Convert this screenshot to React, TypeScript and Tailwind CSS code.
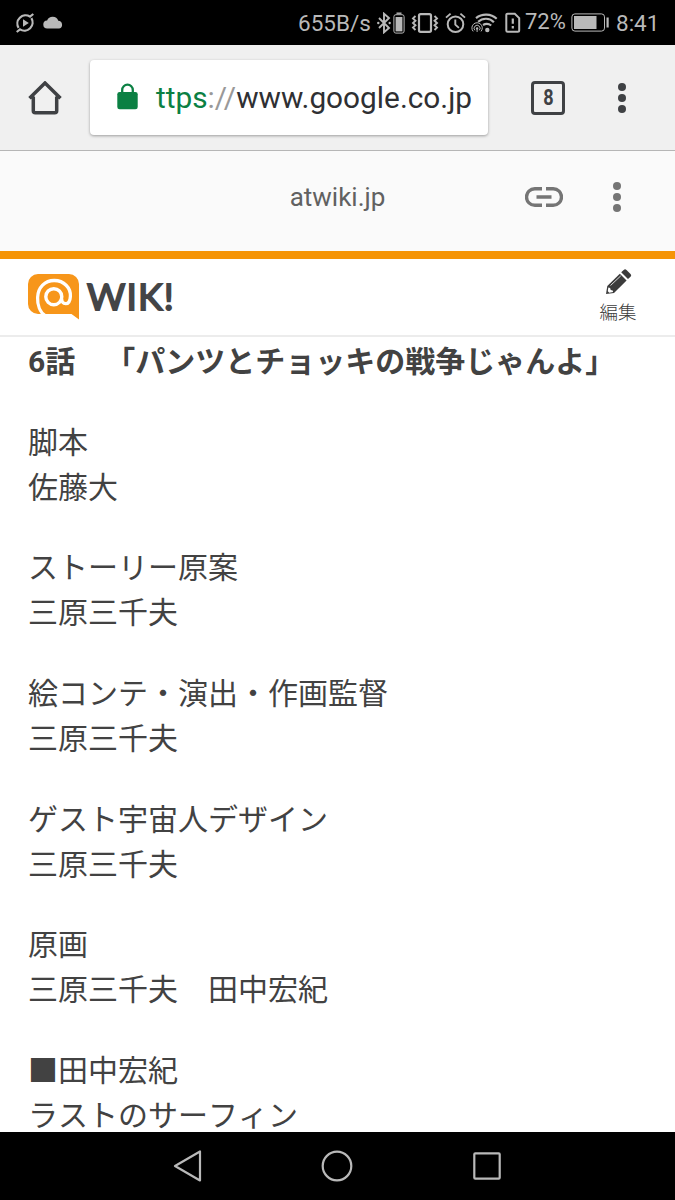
import type { ReactNode } from 'react';

const credits = [
  ['脚本', '佐藤大'],
  ['ストーリー原案', '三原三千夫'],
  ['絵コンテ・演出・作画監督', '三原三千夫'],
  ['ゲスト宇宙人デザイン', '三原三千夫'],
  ['原画', '三原三千夫　田中宏紀'],
  ['■田中宏紀', 'ラストのサーフィン'],
];

function Icon({ w, h, className = '', children }: { w: number; h: number; className?: string; children: ReactNode }) {
  return (
    <svg width={w} height={h} viewBox={`0 0 ${w} ${h}`} fill="none" className={`shrink-0 ${className}`}>
      {children}
    </svg>
  );
}

function MoreDots({ className }: { className: string }) {
  return (
    <Icon w={10} h={32} className={className}>
      <circle cx="5" cy="5" r="4" fill="currentColor" />
      <circle cx="5" cy="16" r="4" fill="currentColor" />
      <circle cx="5" cy="27" r="4" fill="currentColor" />
    </Icon>
  );
}

function StatusBar() {
  return (
    <div className="h-[45px] shrink-0 bg-black text-[#b9b9b9] flex items-center pl-[15px]">
      <Icon w={20} h={20}>
        <path d="M3.6 14.8A8.2 8.2 0 0 1 15 3.6L18.3 1M16.4 5.2A8.2 8.2 0 0 1 5 16.4L1.7 19" stroke="currentColor" strokeWidth="2.2" />
        <path d="M8 6.3v7.4l5.8-3.7z" fill="currentColor" />
      </Icon>
      <Icon w={21} h={13} className="ml-2">
        <path d="M4.5 12.5a4 4 0 0 1-.4-8A6 6 0 0 1 15.3 4.7a4 4 0 0 1 1 7.8z" fill="currentColor" />
      </Icon>

      <span className="ml-[234px] mt-[2px] w-[79px] text-[22.5px] leading-none whitespace-nowrap">655B/s</span>

      {/* Bluetooth + headset battery */}
      <Icon w={14} h={22}>
        <path d="M2 6l10 10-5 4.3V1.7L12 6 2 16" stroke="currentColor" strokeWidth="1.9" />
        <circle cx="1.3" cy="11" r="1.2" fill="currentColor" />
        <circle cx="12.7" cy="11" r="1.2" fill="currentColor" />
      </Icon>
      <Icon w={12} h={22} className="ml-[2px]">
        <path d="M3.5 1.2h5" stroke="currentColor" strokeWidth="1.4" />
        <rect x=".9" y="2.7" width="10.2" height="18.4" rx="2" stroke="currentColor" strokeWidth="1" />
        <rect x="2.6" y="5" width="6.8" height="14.4" fill="currentColor" />
      </Icon>

      {/* Vibrate */}
      <Icon w={28} h={20} className="ml-[6px]">
        <rect x="8" y="1.2" width="12" height="17.6" rx="1.5" stroke="currentColor" strokeWidth="2.2" />
        <path d="M4.5 3L2 5.4l2.5 2.3L2 10l2.5 2.3L2 14.6 4.5 17M23.5 3L26 5.4l-2.5 2.3L26 10l-2.5 2.3 2.5 2.3-2.5 2.4" stroke="currentColor" strokeWidth="1.9" />
      </Icon>

      {/* Alarm */}
      <Icon w={21} h={22} className="ml-[6px]">
        <circle cx="10.5" cy="12.3" r="7.8" stroke="currentColor" strokeWidth="2" />
        <path d="M1 5.6l4.6-4M20 5.6l-4.6-4M10.3 7.4v5.2l3.6 3.3" stroke="currentColor" strokeWidth="1.9" />
      </Icon>

      {/* Wi-Fi with a hotspot badge */}
      <Icon w={28} h={22} className="ml-[5px]">
        <path d="M5 6.2a16 16 0 0 1 20.7.6M7.2 9.8a11 11 0 0 1 15.7.5M12 13a7 7 0 0 1 8.2.5" stroke="currentColor" strokeWidth="2.2" />
        <circle cx="16.3" cy="18" r="2.2" fill="currentColor" />
        <path d="M2.2 19.4a5.2 5.2 0 1 1 7.8 0M3.9 18.3a3 3 0 1 1 4.4 0" stroke="currentColor" strokeWidth="1" />
        <circle cx="6.1" cy="16.4" r="1.2" fill="currentColor" />
        <path d="M6.1 16.4V20" stroke="currentColor" strokeWidth="1" />
      </Icon>

      {/* SIM alert */}
      <Icon w={16} h={22} className="ml-[6px]">
        <path d="M2.6 1.7h7.2l4.4 4.4v12.2a1.5 1.5 0 0 1-1.5 1.5H2.6a1.3 1.3 0 0 1-1.3-1.3V3a1.3 1.3 0 0 1 1.3-1.3z" stroke="currentColor" strokeWidth="2" />
        <path d="M7.8 6.5v5.3M7.8 14v2.4" stroke="currentColor" strokeWidth="2.2" />
      </Icon>

      <span className="ml-[4px] w-[46px] text-[22px] leading-none whitespace-nowrap -mt-px">72%</span>
      <Icon w={39} h={19} className="-mt-px">
        <rect x=".9" y=".9" width="32.6" height="17.2" rx="3" stroke="currentColor" strokeWidth="1" />
        <rect x="3" y="3" width="22.5" height="13" fill="currentColor" />
        <rect x="35.5" y="4.5" width="2.2" height="10" fill="currentColor" />
      </Icon>
      <span className="ml-[6px] mt-[2px] text-[22.5px] leading-none whitespace-nowrap">8:41</span>
    </div>
  );
}

function Toolbar() {
  return (
    <div className="h-[106px] shrink-0 bg-[#f0f0f0] border-b border-[#b6b6b6] flex items-center pl-[28px]">
      <Icon w={34} h={34} className="text-[#3f4144]">
        <path d="M1.5 17.2L17 2l15.5 15.2M5.3 15.5v14.3a2 2 0 0 0 2 2h19.4a2 2 0 0 0 2-2V15.5" stroke="currentColor" strokeWidth="3.5" />
      </Icon>

      <div className="ml-[28px] w-[398px] h-[75px] bg-white rounded-[4px] shadow-[0_1px_3px_rgba(0,0,0,0.35)] flex items-center pl-[27px]">
        <Icon w={21} h={27} className="text-[#0b8043] -mt-[3px]">
          <path d="M5.2 10V7a5.3 5.3 0 0 1 10.6 0v3" stroke="currentColor" strokeWidth="2.3" />
          <rect x=".3" y="9" width="20.4" height="17.3" rx="2.3" fill="currentColor" />
        </Icon>
        <div className="ml-[18px] text-[29.8px] leading-none whitespace-nowrap text-[#2f3033]">
          <span className="text-[#0b8043]">ttps</span>
          <span className="text-[#999]">://</span>
          www.google.co.jp
        </div>
      </div>

      <div className="ml-[43px] w-[34px] h-[34px] border-[3.5px] border-[#3f4144] rounded-[4px] flex items-center justify-center text-[22px] leading-none font-bold text-[#3f4144]">
        <span className="scale-x-[0.82]">8</span>
      </div>
      <MoreDots className="ml-[52px] text-[#3f4144]" />
    </div>
  );
}

function SiteBar() {
  return (
    <div className="h-[100px] shrink-0 bg-[#fafafa] flex items-center pb-[8px]">
      <span className="ml-[175px] w-[325px] text-center text-[26px] leading-none text-[#616161]">atwiki.jp</span>
      <Icon w={38} h={20} className="ml-[25px] text-[#757575]">
        <path d="M17 1.7H9.8a8.3 8.3 0 0 0 0 16.6H17M21 1.7h7.2a8.3 8.3 0 0 1 0 16.6H21M11.5 10h15" stroke="currentColor" strokeWidth="3.4" />
      </Icon>
      <MoreDots className="ml-[49px] text-[#757575]" />
    </div>
  );
}

function WikiLogo() {
  return (
    <div className="flex items-start">
      <Icon w={51} h={46}>
        <path d="M10 0h31a10 10 0 0 1 10 10v35.5L43.5 40H10A10 10 0 0 1 0 30V10A10 10 0 0 1 10 0z" fill="#f7961a" />
        <path d="M17.5 42C12 38.5 9.3 31 9.6 23.5 10 13.5 17 6.4 26.3 6.5 36 6.6 42.8 13.8 42.4 22.3c-.3 5-2.2 7.4-4.7 7.4-2.6 0-4.2-2-4-5" stroke="#fff" strokeWidth="3.3" />
        <circle cx="25.8" cy="22.7" r="8" stroke="#fff" strokeWidth="3.4" />
      </Icon>
      <span className="ml-[8px] font-[Lato,sans-serif] text-[37px] leading-[44px] tracking-[1.2px] whitespace-nowrap text-[#444547] [-webkit-text-stroke:1.8px_#444547]">
        WIK!
      </span>
    </div>
  );
}

function WikiHeader() {
  return (
    <div className="h-[86px] shrink-0 bg-white border-t-[8px] border-t-[#f59406] border-b-2 border-b-[#ececec] flex justify-between pl-[28px] pr-[38px]">
      <div className="pt-[15px]">
        <WikiLogo />
      </div>
      <div className="w-[38px] flex flex-col items-center pt-[10px] text-[#3c3c3c]">
        <Icon w={27} h={26}>
          <path d="M1 25l1.3-8L14.8 4.7l6.8 6.7L9 24z" fill="currentColor" />
          <path d="M16.2 3.3L18.7.9a2 2 0 0 1 2.8 0l4 4a2 2 0 0 1 0 2.8L23 10z" fill="currentColor" />
          <path d="M5.5 16.5L15.8 6.8" stroke="#fff" strokeWidth=".8" />
          <path d="M3.3 18.5l1.8.6.6 2 2 .4.4 1.5-3.8.7-1.5-1.5z" fill="#fff" />
        </Icon>
        <span className="mt-[8px] text-[18.5px] leading-[20px] font-light whitespace-nowrap">編集</span>
      </div>
    </div>
  );
}

function NavBar() {
  return (
    <div className="h-[68px] shrink-0 bg-black text-[#b9b9b9] flex items-center pl-[173px]">
      <Icon w={30} h={32}>
        <path d="M27 1.5v29L2 16z" stroke="currentColor" strokeWidth="2.2" strokeLinejoin="round" />
      </Icon>
      <Icon w={32} h={32} className="ml-[118px]">
        <circle cx="16" cy="16" r="14.3" stroke="currentColor" strokeWidth="2.2" />
      </Icon>
      <Icon w={28} h={28} className="ml-[120px]">
        <rect x="1.3" y="1.3" width="25.4" height="25.4" rx="1" stroke="currentColor" strokeWidth="2.2" />
      </Icon>
    </div>
  );
}

export default function App() {
  return (
    <div className="w-[675px] h-[1200px] bg-white overflow-hidden flex flex-col font-[Roboto,'Noto_Sans_CJK_JP',sans-serif]">
      <StatusBar />
      <Toolbar />
      <SiteBar />
      <WikiHeader />

      <main className="flex-1 min-h-0 overflow-hidden pl-[28px] text-[30px] leading-[45px] text-[#424242] [font-kerning:none] [text-spacing-trim:space-all]">
        <h1 className="mt-[2px] font-bold whitespace-nowrap">6話　「パンツとチョッキの戦争じゃんよ」</h1>
        {credits.map(([role, name]) => (
          <p key={role} className="mt-[35.7px] whitespace-nowrap">
            {role}
            <br />
            {name}
          </p>
        ))}
      </main>

      <NavBar />
    </div>
  );
}
